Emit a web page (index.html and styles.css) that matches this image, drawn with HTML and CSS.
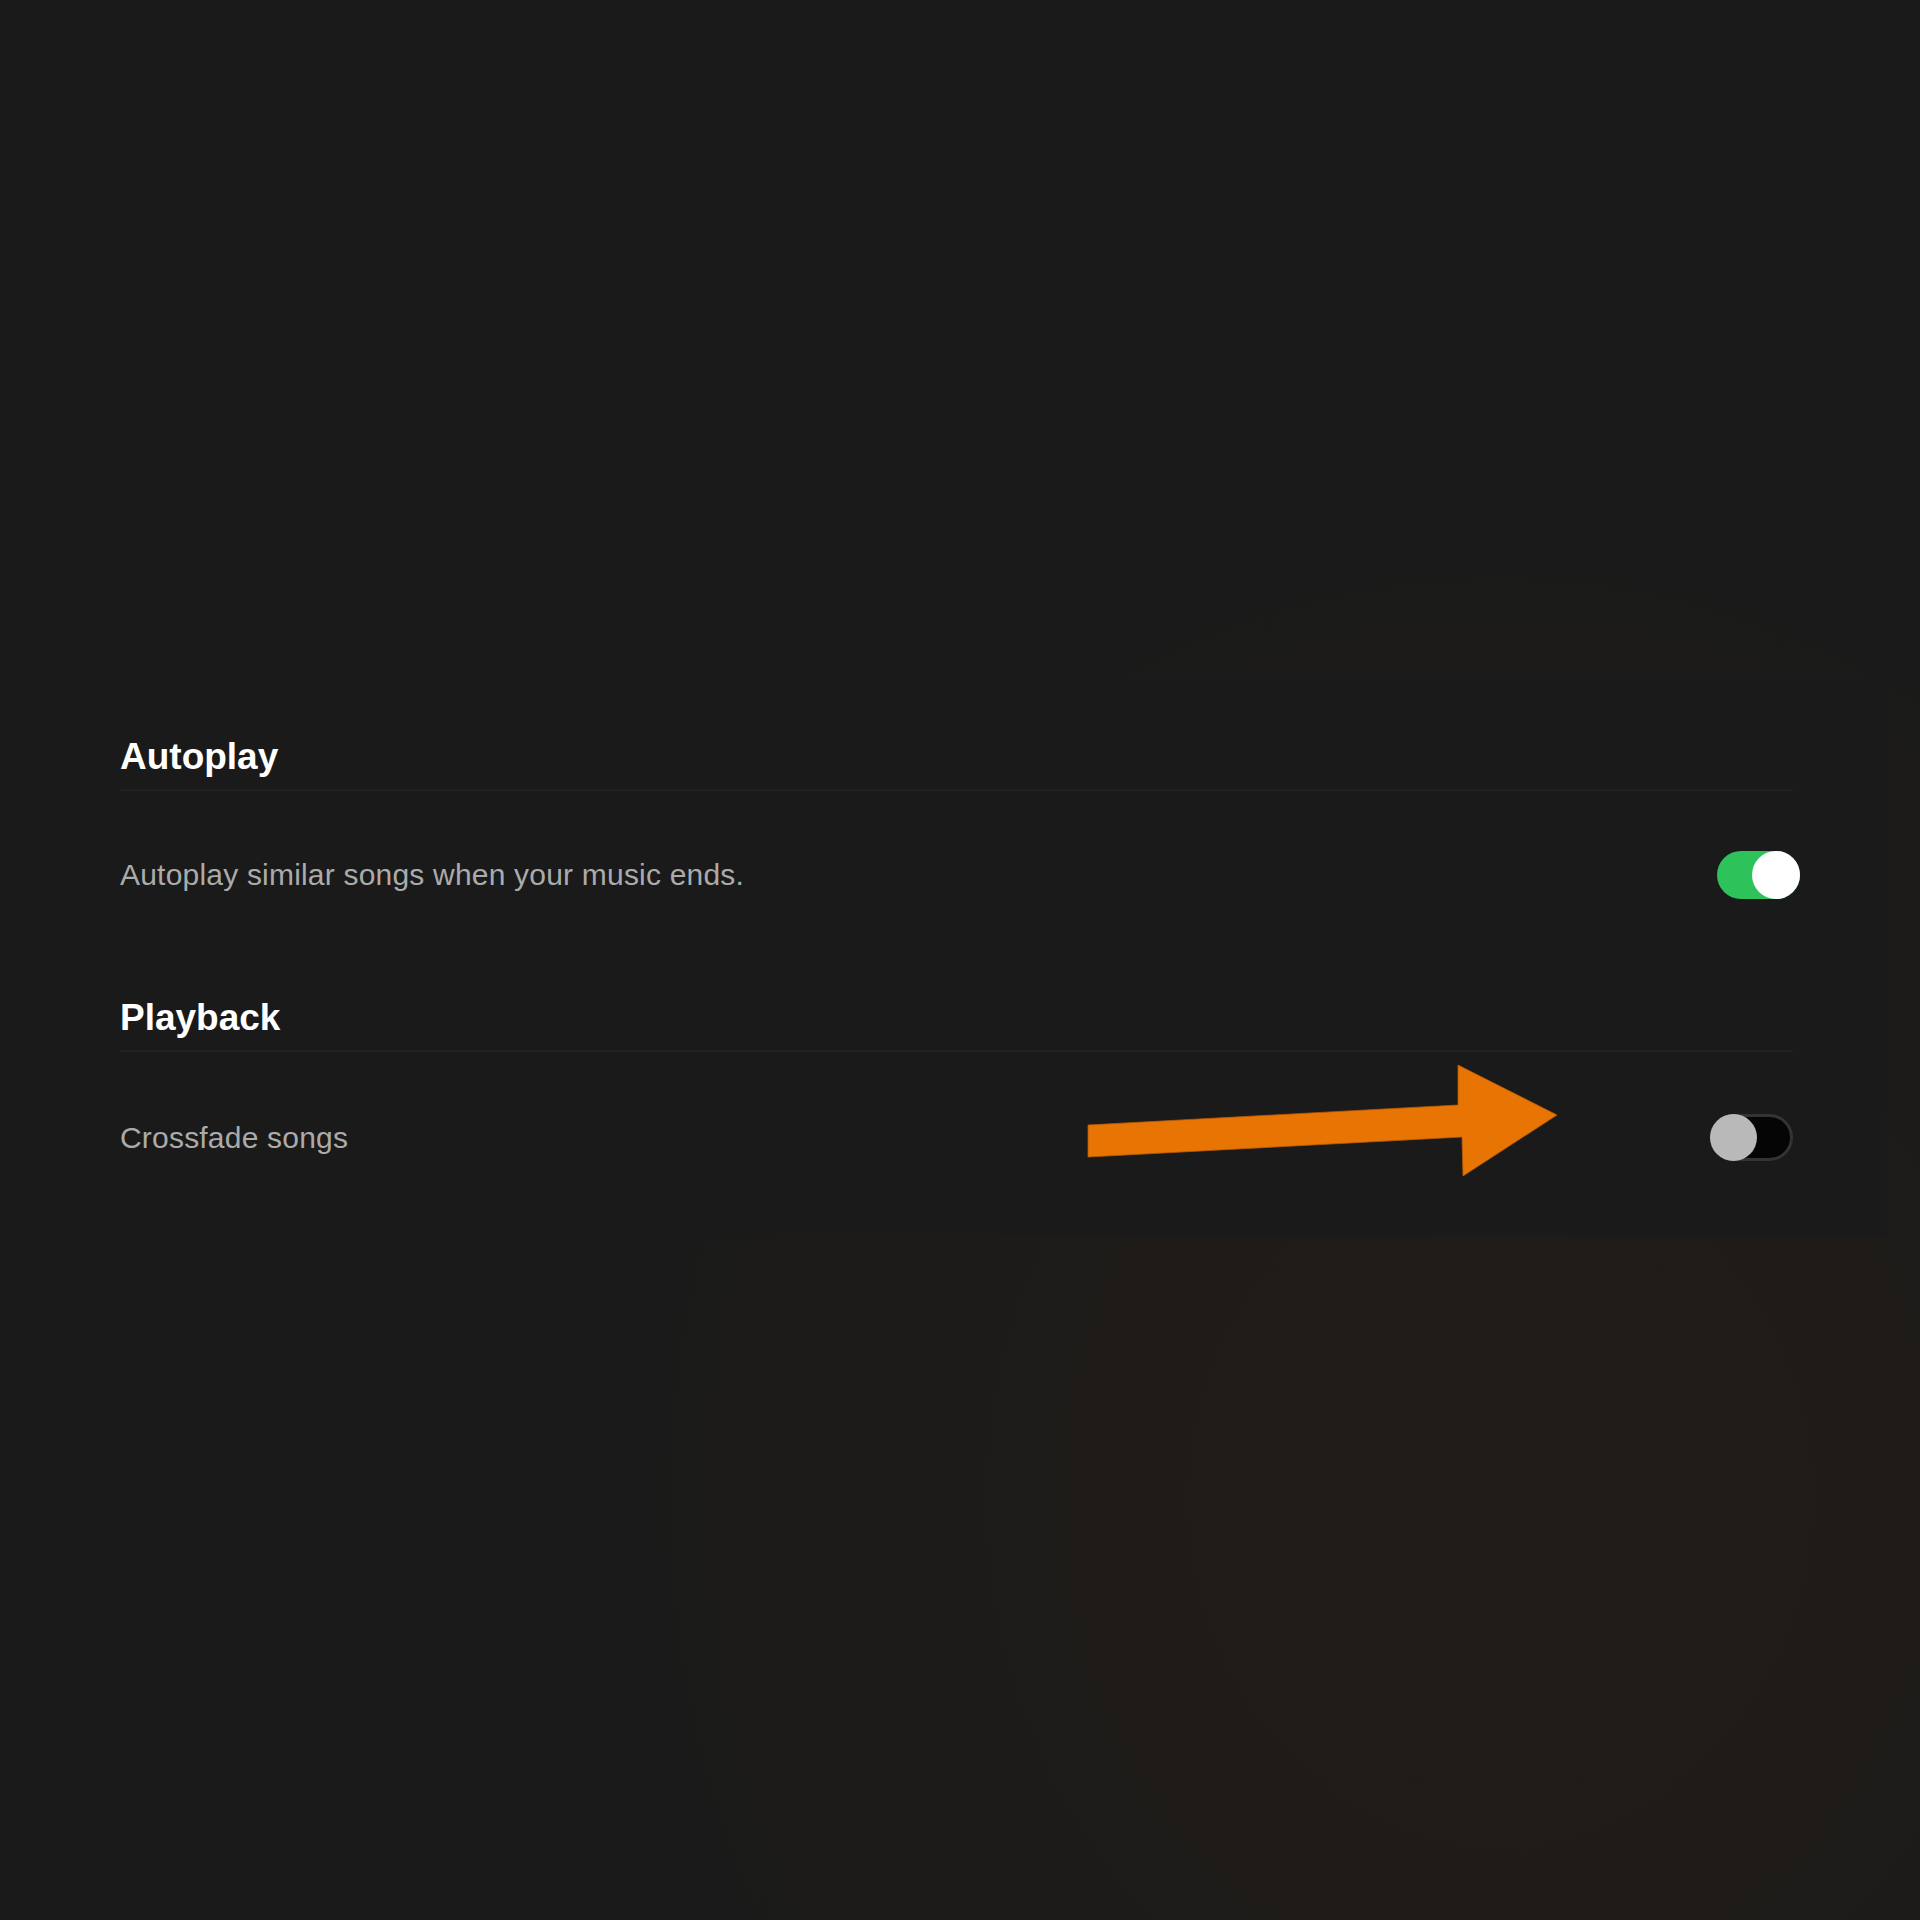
FILE: index.html
```html
<!DOCTYPE html>
<html lang="en">
<head>
<meta charset="utf-8">
<title>Settings</title>
<link rel="stylesheet" href="styles.css">
</head>
<body>
<div class="page">
  <section class="panel">
    <div class="section">
      <h2 class="section-title">Autoplay</h2>
      <div class="row">
        <span class="row-label">Autoplay similar songs when your music ends.</span>
        <span class="toggle toggle-on"><span class="knob"></span></span>
      </div>
    </div>
    <div class="section">
      <h2 class="section-title">Playback</h2>
      <div class="row">
        <span class="row-label">Crossfade songs</span>
        <span class="toggle toggle-off"><span class="knob"></span></span>
      </div>
    </div>
    <svg class="arrow" width="474" height="115" viewBox="0 0 474 115" aria-hidden="true">
      <polygon points="2,94 2,62 372,42 372,2 471,52 377,113 376,74" fill="#e87503" stroke="#b85c04" stroke-width="0.8" stroke-linejoin="miter"/>
    </svg>
  </section>
</div>
</body>
</html>
```
FILE: styles.css
```css
html, body {
  margin: 0;
  padding: 0;
}
body {
  width: 1920px;
  height: 1920px;
  background:
    radial-gradient(ellipse 900px 1000px at 1500px 1500px, rgba(40, 30, 22, 0.55), rgba(40, 30, 22, 0) 100%),
    #1a1a1a;
  font-family: "Liberation Sans", Arial, sans-serif;
  overflow: hidden;
}
.page {
  padding-top: 680px;
  padding-left: 30px;
}
.panel {
  position: relative;
  width: 1857px;
  box-sizing: border-box;
  padding: 55px 94px 75px 90px;
  background: #1a1a1a;
}
.section-title {
  margin: 0;
  font-size: 37px;
  line-height: 44px;
  font-weight: 700;
  color: #ffffff;
  padding-bottom: 10px;
  border-bottom: 2px solid #212121;
}
.row {
  display: flex;
  align-items: center;
  justify-content: space-between;
  padding-top: 60px;
}
.section + .section .row {
  padding-top: 62px;
}
.section + .section {
  margin-top: 97px;
}
.row-label {
  font-size: 30px;
  letter-spacing: 0.2px;
  color: #ababab;
  line-height: 40px;
}
.toggle {
  display: flex;
  align-items: center;
  box-sizing: border-box;
  width: 83px;
  height: 48px;
  border-radius: 24px;
}
.toggle-on {
  background: #2dc35a;
  justify-content: flex-end;
  margin-right: -7px;
}
.toggle-on .knob {
  width: 48px;
  height: 48px;
  border-radius: 50%;
  background: #ffffff;
}
.toggle-off {
  background: #050505;
  border: 3px solid #333333;
  height: 47px;
  justify-content: flex-start;
}
.toggle-off .knob {
  width: 47px;
  height: 47px;
  margin-left: -3px;
  border-radius: 50%;
  background: #b9b9b9;
}
.arrow {
  position: absolute;
  left: 1056px;
  top: 383px;
}
```
